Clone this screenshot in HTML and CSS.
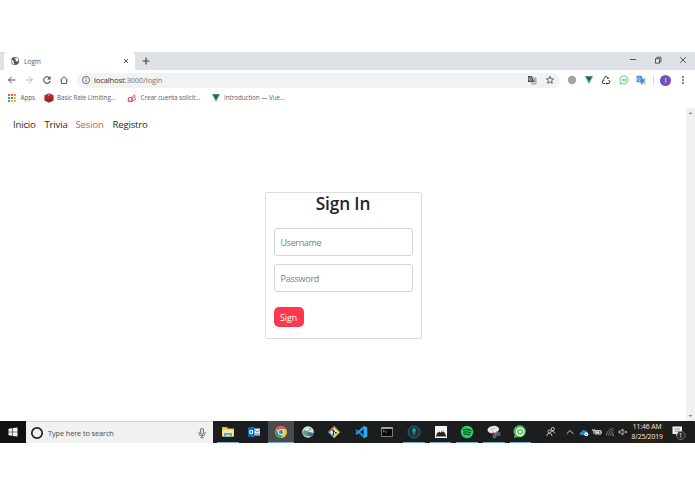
FILE: index.html
```html
<!DOCTYPE html>
<html lang="en">
<head>
<meta charset="utf-8">
<title>Login</title>
<link rel="stylesheet" href="styles.css">
</head>
<body>
<div class="desktop">
  <header class="tabstrip">
    <div class="edge"></div>
    <div class="tab">
      <svg class="globe" viewBox="0 0 10 10"><circle cx="5" cy="5" r="4" fill="#53585d"/><path d="M1.500 3.500 3.500 5l.2 2L5 8.500 2.500 7.600 1.300 5zM5.500 1.800 4.500 3l1.500.5L5.500 5l2 .5L8.500 4 7.500 2.300z" fill="#fff"/></svg>
      <span class="tab-title">Login</span>
      <svg class="close" viewBox="0 0 8 8"><path d="m2 2 4 4M6 2 2 6" stroke="#44474b" stroke-width=".9"/></svg>
    </div>
    <svg class="newtab" viewBox="0 0 10 10"><path d="M5 1.500v7M1.500 5h7" stroke="#44474b" stroke-width="1.200"/></svg>
    <div class="window-controls">
      <svg viewBox="0 0 10 10"><path d="M2 4.500h6" stroke="#333" stroke-width=".8"/></svg>
      <svg viewBox="0 0 10 10"><path d="M2.500 3.700h4v4.500h-4zM4 3.500V2.200h4v4.500H6.700" fill="none" stroke="#333" stroke-width=".8"/></svg>
      <svg viewBox="0 0 10 10"><path d="m2.200 2.200 5.600 5.600M7.800 2.200 2.200 7.800" stroke="#333" stroke-width=".8"/></svg>
    </div>
  </header>

  <div class="toolbar">
    <div class="navigation">
      <svg viewBox="0 0 10 10"><path d="M8.500 5h-7M4.700 1.800 1.500 5l3.200 3.200" fill="none" stroke="#505357"/></svg>
      <svg viewBox="0 0 10 10"><path d="M1.500 5h7M5.300 1.800 8.500 5 5.300 8.200" fill="none" stroke="#b4b6b8"/></svg>
      <svg viewBox="0 0 10 10"><path d="M7.600 3A3.300 3.300 0 1 0 8.200 6" fill="none" stroke="#505357" stroke-width="1.100"/><path d="M8.600 1v3.500H5.100z" fill="#505357"/></svg>
      <svg viewBox="0 0 10 10"><path d="M1.200 5.200 5 1.800l3.800 3.400M2.400 4.700v3.700h5.200V4.700" fill="none" stroke="#505357"/></svg>
    </div>
    <div class="address">
      <svg class="info" viewBox="0 0 10 10"><circle cx="5" cy="5" r="3.600" fill="none" stroke="#606368" stroke-width=".9"/><path d="M5 4.500v2.300M5 2.800v.9" stroke="#606368"/></svg>
      <span class="url"><b>localhost</b>:3000/login</span>
      <svg class="translate" viewBox="0 0 10 10"><path d="M4 3h5v6H5z" fill="#e6e8ea" stroke="#777a7e" stroke-width=".7"/><path d="M1 1h4l2 6H1z" fill="#505357"/><path d="M4.600 3.200a1.400 1.400 0 1 0 0 1.600H3.400" fill="none" stroke="#fff" stroke-width=".6"/><path d="M6 5h2.500M7.200 4.300V5c0 1-.4 1.800-1 2.400M6.700 5.500l1.600 2" fill="none" stroke="#606368" stroke-width=".6"/></svg>
      <svg class="star" viewBox="0 0 10 10"><path d="m5 1.300 1 2.500 2.700.2-2.100 1.700.7 2.700L5 6.900 2.700 8.400l.7-2.700L1.300 4 4 3.800z" fill="none" stroke="#505357" stroke-width=".9"/></svg>
    </div>
    <div class="extensions">
      <svg viewBox="0 0 10 10"><circle cx="5" cy="5" r="4.200" fill="#a3a3a3"/></svg>
      <svg viewBox="0 0 10 10"><path d="M.8 1.300h8.400L5 8.800z" fill="#42a982"/><path d="M2.500 1.300h5L5 5.900z" fill="#263b49"/><path d="M4.200 1.300h1.600L5 2.800z" fill="#fff"/></svg>
      <svg viewBox="0 0 10 10"><g fill="none" stroke="#34373a" stroke-width="1"><path d="M3 3.800 4.300 1.500h1.400L6.900 3.400"/><path d="M2.300 5 1.100 7.200l.7 1.300h2.300"/><path d="M5.900 8.500h2.300l.7-1.300-1.200-2.200"/></g><path d="m5.700 3.700 2 .4V2.200zM6 7.200v2.500L4.700 8.500zM1.200 4.800l2-.6.2 1.900z" fill="#34373a"/></svg>
      <svg viewBox="0 0 10 10"><path d="M1 9.100 1.500 7a4.100 4.100 0 1 1 1.700 1.600z" fill="#fff" stroke="#5ac462" stroke-width=".9"/><path d="M3.300 3.700v2.600M4.500 3.700v2.600M3 5h1.800M5.700 3.900h1.500v2.300H5.700zM5.700 5h1.500" fill="none" stroke="#5ac462" stroke-width=".6"/></svg>
      <svg viewBox="0 0 10 10"><path d="M4 3h5.300v6.300H5z" fill="#dce1e7" stroke="#a1b1c4" stroke-width=".4"/><path d="M.6.800h4.900l2 6.500H.6z" fill="#4285e8"/><path d="M4.500 3.100a1.500 1.500 0 1 0 .1 1.700H3.300" fill="none" stroke="#fff" stroke-width=".7"/><path d="M6 5h3M7.500 4.300V5c0 1.100-.5 1.800-1.100 2.400M6.700 5.500l1.900 2.200" fill="none" stroke="#3a70b5" stroke-width=".7"/><path d="M5 7.300h2.500L5.200 9.300z" fill="#3a70b5"/></svg>
    </div>
    <div class="divider"></div>
    <div class="avatar">I</div>
    <svg class="menu" viewBox="0 0 10 10"><g fill="#505357"><circle cx="5" cy="2" r=".9"/><circle cx="5" cy="5" r=".9"/><circle cx="5" cy="8" r=".9"/></g></svg>
  </div>

  <nav class="bookmarks">
    <div class="bookmark apps"><svg viewBox="0 0 10 10"><path d="M1 1h2v2H1zM4 1h2v2H4z" fill="#e65145"/><path d="M7 1h2v2H7z" fill="#ef8b38"/><path d="M1 4h2v2H1z" fill="#4ba55d"/><path d="M4 4h2v2H4z" fill="#4b83d4"/><path d="M7 4h2v2H7z" fill="#f0b83d"/><path d="M1 7h2v2H1z" fill="#4ba55d"/><path d="M4 7h2v2H4zM7 7h2v2H7z" fill="#efb83c"/></svg><span>Apps</span></div>
    <div class="bookmark rate"><svg viewBox="0 0 10 10"><path d="m.5 2.300 4.500-2 4.500 2v5.200L5 9.800.5 7.500z" fill="#b72a2c"/><path d="m.5 4.500 4.500 2 4.500-2M.5 6.300l4.500 2 4.500-2" fill="none" stroke="#801c22" stroke-width=".7"/><path d="m4 1.500 2 .5-1.500.8zM6 3.200l1.700-.7" fill="#fff"/></svg><span>Basic Rate Limiting...</span></div>
    <div class="bookmark cuenta"><svg viewBox="0 0 10 10"><g fill="none" stroke="#dc3e65"><circle cx="3.200" cy="6.500" r="2" stroke-width="1.100"/><circle cx="6.700" cy="5.600" r="1.700" stroke-width=".9"/><path d="M5 3.800 7.500 1.300 8.300 4M3 8.800l3.300-1" stroke-width=".7"/></g></svg><span>Crear cuenta solicit...</span></div>
    <div class="bookmark vue"><svg viewBox="0 0 10 10"><path d="M.8 1.300h8.400L5 8.800z" fill="#42a982"/><path d="M2.500 1.300h5L5 5.900z" fill="#263b49"/><path d="M4.200 1.300h1.600L5 2.800z" fill="#fff"/></svg><span>Introduction — Vue...</span></div>
  </nav>

  <div class="viewport">
    <main class="page">
      <nav class="site-nav"><a class="inicio">Inicio</a><a class="trivia">Trivia</a><a class="sesion active">Sesion</a><a class="registro">Registro</a></nav>
      <form class="card">
        <h1>Sign In</h1>
        <div class="field username"><span>Username</span></div>
        <div class="field password"><span>Password</span></div>
        <button type="button"><span>Sign</span></button>
      </form>
    </main>
    <div class="scrollbar">
      <svg viewBox="0 0 9 10"><path d="M2.500 6 4.500 4l2 2z" fill="#85878a"/></svg>
      <svg viewBox="0 0 9 10"><path d="m2.500 4 2 2 2-2z" fill="#85878a"/></svg>
    </div>
  </div>

  <footer class="taskbar">
    <div class="start"><svg viewBox="0 0 10 10"><path d="m.5 1.700 3.700-.5v3.500H.5zM4.800 1.100 9.500.5v4.200H4.800zM.5 5.300h3.700v3.500l-3.700-.5zM4.800 5.300h4.700v4.200l-4.700-.6z" fill="#f1f1f1"/></svg></div>
    <div class="search">
      <svg class="cortana" viewBox="0 0 14 14"><circle cx="7" cy="7" r="5.200" fill="none" stroke="#222" stroke-width="1.700"/></svg>
      <span>Type here to search</span>
      <svg class="mic" viewBox="0 0 10 12"><rect x="3.400" y="1.400" width="3.200" height="6" rx="1.500" fill="#ddd" stroke="#555" stroke-width=".8"/><path d="M2 5v1.500Q2 9 5 9t3-2.500V5M5 9v1.800M3.500 10.800h3" fill="none" stroke="#555" stroke-width=".8"/></svg>
    </div>
    <div class="apps-bar">
      <div class="app running"><svg viewBox="0 0 14 14"><path d="M1 2h5l1 1.500h6v8H1z" fill="#e7b947"/><path d="M1.500 4.500h11v7h-11z" fill="#ffe69a"/><path d="M3 8h8v4H9v-2H5v2H3z" fill="#48aee3"/></svg></div>
      <div class="app"><svg viewBox="0 0 14 14"><path d="M7 3.500h6v7H7z" fill="#eaf4fb"/><path d="m8 5 2.300 2L13 5M8 9h5" stroke="#1974bd" fill="none" stroke-width=".9"/><path d="m1 2.500 6.500-1v11l-6.500-1z" fill="#0871bf"/><ellipse cx="4.200" cy="7" rx="1.400" ry="1.800" fill="none" stroke="#fff" stroke-width="1.100"/></svg></div>
      <div class="app running current"><svg viewBox="0 0 14 14"><circle cx="7" cy="7" r="6" fill="#f3c63a"/><path d="M7 7 1.800 4A6 6 0 0 1 12.200 4H7z" fill="#e45747"/><path d="M1.800 4A6 6 0 0 0 6.700 13L9.300 8.500 7 7 4.500 8.500z" fill="#35a56a"/><circle cx="7" cy="7" r="2.900" fill="#fff"/><circle cx="7" cy="7" r="2.200" fill="#4786ed"/></svg></div>
      <div class="app"><svg viewBox="0 0 14 14"><circle cx="7" cy="7" r="5.800" fill="#dce6e5"/><path d="M2 9C2 3 7 2 11 4l-4 2 2 2-3 4z" fill="#5f9d8b"/><path d="m8 7 5 1-3 4-4-2z" fill="#426d99"/><path d="M3 4.500 7 3l2 1-3 2z" fill="#fff"/></svg></div>
      <div class="app"><svg viewBox="0 0 14 14"><path d="M7 .7v6.200H.8z" fill="#e6604c"/><path d="M7 .7 13.200 7H7z" fill="#93be4b"/><path d="M.8 7H7v6.300z" fill="#58a6df"/><path d="M7 7h6.200L7 13.300z" fill="#f1d15d"/><path d="m7 2.900 4.100 4.100L7 11.100 2.900 7z" fill="#eee9df"/><path d="M5 4.500 9 8M6.500 5.500V10" stroke="#29292b" stroke-width="1"/><g fill="#29292b"><circle cx="6.500" cy="5.600" r=".9"/><circle cx="9" cy="7.800" r=".9"/><circle cx="6.500" cy="9.600" r=".9"/></g></svg></div>
      <div class="app"><svg viewBox="0 0 14 14"><path d="m9.800.8 3.400 1.600v9.200l-3.400 1.600L1.200 5.500 2.500 4.200 9.800 9.800z" fill="#1980c4"/><path d="M9.800.8v3.400L2.500 9.800 1.200 8.500z" fill="#249ce5"/><path d="m9.800.8 3.400 1.600v9.200l-3.400 1.600z" fill="#35a7ee"/></svg></div>
      <div class="app"><svg viewBox="0 0 14 14"><path d="M1.500 2.500h11v9h-11z" fill="#08090a" stroke="#a7abae" stroke-width=".7"/><path d="M1.500 2.500h11v1.300h-11z" fill="#c5c8ca"/><path d="m3 5 1.500 1L3 7M5 7h2" fill="none" stroke="#c4c4c4" stroke-width=".6"/></svg></div>
      <div class="app running"><svg viewBox="0 0 14 14"><circle cx="7" cy="7" r="6" fill="#172e38" stroke="#287985" stroke-width=".8"/><circle cx="7" cy="7" r="4.300" fill="none" stroke="#245a66" stroke-width=".5"/><path d="M7 2.800 9 5 8 8.500 7 11 6 8.500 5 5z" fill="#2aa1a5"/><path d="M7 6v5" stroke="#17333a" stroke-width=".6"/></svg></div>
      <div class="app running"><svg viewBox="0 0 14 14"><path d="M1 1h12v12H1z" fill="#f5f5f5"/><path d="m1.700 11.500 2.800-6 2 2.300L9 4.500l3.500 7z" fill="#232323"/><path d="m3.700 7.200.8-1.700 1.300 1.500-.8-.3-.5 1zM8 5.900 9 4.500l1.300 2.500-.8-.5-.7 1z" fill="#fff"/></svg></div>
      <div class="app running"><svg viewBox="0 0 14 14"><circle cx="7" cy="7" r="6.200" fill="#1ed362"/><path d="M3.200 4.800q4-1.200 7.800.8M3.600 7.100q3.500-.9 6.700.7M4 9.200q3-.7 5.500.6" fill="none" stroke="#16301f" stroke-linecap="round" stroke-width="1.100"/></svg></div>
      <div class="app running"><svg viewBox="0 0 14 14"><ellipse cx="6.300" cy="4.600" rx="5.800" ry="3.700" fill="#e8e6e6" transform="rotate(-8 6.300 4.600)"/><path d="M3.500 3.800 6 5M6 3l2 .8" stroke="#cf8a8c" stroke-width=".8"/><path d="m5 7 5.500 2.500M10 6l-2 5" stroke="#d46a6d" stroke-width=".9"/><g fill="none" stroke="#437ebc" stroke-width="1.300"><circle cx="11.500" cy="9" r="1.400"/><circle cx="7.500" cy="11.300" r="1.400"/></g></svg></div>
      <div class="app running"><svg viewBox="0 0 14 14"><path d="m1 13 .7-3.200A6.100 6.100 0 1 1 4.600 12z" fill="#4bc252"/><circle cx="7.100" cy="6.800" r="4.400" fill="#fff"/><circle cx="7.100" cy="6.800" r="3" fill="#4bc252"/><circle cx="7.100" cy="6.800" r="1.500" fill="#fff"/></svg></div>
    </div>
    <div class="tray">
      <svg class="people" viewBox="0 0 12 12"><g fill="none" stroke="#ddd" stroke-width=".8"><circle cx="4.500" cy="5.500" r="1.600"/><path d="M1.700 10Q2 7 4.500 7.200T7 10M6 5Q9 4.500 10 7.500"/><circle cx="7.800" cy="3" r="1.600"/></g></svg>
      <svg class="chevron" viewBox="0 0 10 10"><path d="m1.700 6.800 3.300-3.300 3.300 3.300" fill="none" stroke="#e4e4e4" stroke-width=".9"/></svg>
      <svg viewBox="0 0 10 10"><path d="M1 7.500Q0 5 2.500 5q.8-3 3.300-1.500 2.500 0 2.300 2.500Q9.500 7.500 7.500 8H2z" fill="#218bdc"/><circle cx="7.300" cy="7.200" r="2" fill="#fff"/><path d="m6.300 7.200.7.800 1.200-1.300" fill="none" stroke="#218bdc" stroke-width=".6"/></svg>
      <svg viewBox="0 0 10 10"><path d="M3 3.500h6v3.600H3z" fill="#777" stroke="#eee" stroke-width=".7"/><path d="M4 4.500h3v1.600H4zM9.300 4.500h.6v1.600h-.6z" fill="#eee"/><path d="M.7 2v1.700h2V2M1.700 3.700v3" fill="none" stroke="#eee" stroke-width=".8"/></svg>
      <svg viewBox="0 0 10 10"><g fill="none" stroke="#999" stroke-width=".7"><path d="M1.500 8.500a7 7 0 0 1 7-7M3.500 8.500a5 5 0 0 1 5-5M5.500 8.500a3 3 0 0 1 3-3"/></g><circle cx="8" cy="8" r=".8" fill="#bbb"/></svg>
      <svg viewBox="0 0 10 10"><path d="M1 4h1.500L5 2v6L2.500 6H1zM6.500 3.700l2.500 2.500M9 3.700 6.500 6.200" fill="none" stroke="#ddd" stroke-width=".8"/></svg>
    </div>
    <div class="clock"><span class="time">11:46 AM</span><span class="date">8/25/2019</span></div>
    <div class="notice"><svg viewBox="0 0 16 16"><path d="M1.500 1.500h9.500v7.500H7l-2 2V9H1.500z" fill="#f2f2f2"/><path d="M3.500 4h5.500M3.500 6.200h5.500" stroke="#666" stroke-width=".7"/><circle cx="10" cy="10.500" r="4.200" fill="#292929" stroke="#999" stroke-width=".6"/></svg><span class="count">1</span></div>
  </footer>
</div>
</body>
</html>
```
FILE: styles.css
```css
* { box-sizing: border-box; }
body { margin: 0; background: #fff; font-family: "Open Sans", "Noto Sans", sans-serif; }
svg { display: block; flex: none; }
span { white-space: nowrap; }
.desktop { width: 695px; height: 494px; padding-top: 52px; overflow: hidden; }

.tabstrip { display: flex; height: 18px; background: #dee1e6; }
.edge { width: 4px; background: #dee1e6; border-radius: 0 0 3px 0; }
.tab { display: flex; align-items: center; width: 131px; padding: 0 5px 0 6px; background: #fff; border-radius: 4px 4px 0 0; }
.globe { width: 10px; height: 10px; }
.tab-title { margin-left: 4px; font-size: 6.700px; letter-spacing: -.05px; color: #57595d; }
.close { width: 8px; height: 8px; margin-left: auto; }
.newtab { width: 10px; height: 10px; margin: 4px 0 0 6px; }
.window-controls { display: flex; gap: 15px; margin: 3px 7px 0 auto; }
.window-controls svg { width: 10px; height: 10px; }

.toolbar { display: flex; align-items: center; height: 21px; border-bottom: 1px solid #fff; }
.navigation { display: flex; gap: 7.300px; width: 77px; padding-left: 7px; }
.navigation svg { width: 10px; height: 10px; }
.address { display: flex; align-items: center; width: 483px; height: 15px; padding: 0 5px 0 4px; border-radius: 8px; background: #f0f2f4; }
.info { width: 10px; height: 10px; }
.url { margin-left: 3px; font-size: 7.600px; letter-spacing: -.14px; color: #777b80; }
.url b { font-weight: 400; color: #303337; }
.translate { width: 10px; height: 10px; margin-left: auto; }
.star { width: 10px; height: 10px; margin-left: 8px; }
.extensions { display: flex; gap: 7.400px; margin-left: 6.500px; }
.extensions svg { width: 10px; height: 10px; }
.divider { width: 1px; height: 10px; margin-left: 7px; background: #d9dbde; }
.avatar { width: 11px; height: 11px; margin-left: 6px; border-radius: 50%; background: #7650b8; color: #fff; font-size: 7px; line-height: 11px; text-align: center; }
.menu { width: 10px; height: 10px; margin-left: 7px; }

.bookmarks { display: flex; align-items: center; height: 13px; padding-left: 7px; font-size: 6.400px; letter-spacing: -.11px; color: #606368; }
.bookmark { display: flex; align-items: center; }
.bookmark svg { width: 10px; height: 10px; }
.bookmark span { margin-left: 3.500px; }
.apps { width: 36.500px; }
.rate { width: 83.500px; }
.cuenta { width: 83.500px; }

.viewport { display: flex; height: 317px; padding-top: 4px; }
.page { width: 686px; }
.site-nav { display: flex; height: 33px; padding: 8px 0 0 13px; font-size: 9.600px; line-height: 18px; letter-spacing: -.18px; color: #272b2e; }
.inicio { width: 31.500px; }
.trivia { width: 31px; }
.sesion { width: 37px; }
.site-nav .active { color: #d95368; }
.card { width: 157px; height: 147px; margin: 51px 0 0 264.500px; padding: 0 8px; border: 1px solid #dcdddd; border-radius: 2px; }
h1 { margin: 0; height: 35px; font-size: 17.200px; line-height: 21px; font-weight: 600; letter-spacing: -.1px; text-align: center; color: #212529; }
.field { display: flex; align-items: center; width: 139px; height: 28px; padding: 1px 0 0 6px; border: 1px solid #d0d5da; border-radius: 3px; color: #777e85; font-size: 8.600px; letter-spacing: -.3px; }
.field span { letter-spacing: -.25px; }
.username span { letter-spacing: -.35px; }
.field.username span, .field.password span { font-size: 9px; }
.password { margin-top: 8px; }
button { display: block; width: 30px; height: 20px; margin: 15px 0 0; padding: 1px 0 0; border: 0; border-radius: 5px; background: #fc3850; color: #fff; font: 8.900px/19px "Open Sans", sans-serif; letter-spacing: -.1px; }
.scrollbar { display: flex; flex-direction: column; justify-content: space-between; width: 9px; background: #f1f1f1; }
.scrollbar svg { width: 9px; height: 10px; }

.taskbar { display: flex; height: 22px; background: #1c1d1e; color: #eee; }
.start { display: flex; align-items: center; justify-content: center; width: 26px; background: #101112; }
.start svg { width: 10px; height: 10px; }
.search { display: flex; align-items: center; width: 187px; padding: 0 6px 0 4px; background: #f1f1f1; border-top: 1px solid #d7d7d7; color: #4c4c4c; font-size: 7.400px; letter-spacing: -.12px; }
.cortana { width: 14px; height: 14px; }
.search span { margin-left: 4px; }
.mic { width: 10px; height: 12px; margin-left: auto; }
.apps-bar { display: grid; grid-template-columns: repeat(12, 26.600px); padding-left: 1.500px; }
.app { display: flex; align-items: center; justify-content: center; margin: 0 2.500px; border-bottom: 1px solid transparent; }
.app svg { width: 14px; height: 14px; }
.running { border-bottom-color: #78acd3; }
.current { margin: 0; background: #4a4b4d; }
.tray { display: flex; align-items: center; width: 94px; padding-left: 11px; }
.tray svg { width: 10px; height: 10px; margin-right: 3px; }
.tray .people { width: 12px; height: 12px; margin-right: 8px; }
.tray .chevron { margin-right: 4px; }
.clock { display: flex; flex-direction: column; align-items: center; justify-content: center; width: 41px; margin-left: -1px; font-size: 6.800px; line-height: 10px; letter-spacing: -.1px; background: linear-gradient(90deg, #201c19, #352111, #211b17); }
.notice { position: relative; margin-left: 3px; padding-top: 4px; }
.notice svg { width: 16px; height: 16px; }
.count { position: absolute; left: 8px; top: 10px; width: 4px; font-size: 6.500px; line-height: 9px; text-align: center; }
```
